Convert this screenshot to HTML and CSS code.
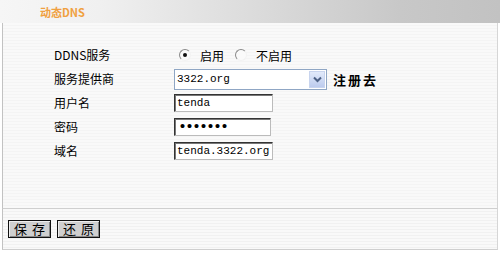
FILE: index.html
```html
<!DOCTYPE html>
<html>
<head>
<meta charset="utf-8">
<link rel="stylesheet" href="styles.css">
</head>
<body>
<div class="header"><span class="title">动态DNS</span></div>
<div class="panel">
  <div class="form">
    <div class="label">DDNS服务</div>
    <div class="ctrl">
      <span class="radio checked"></span><span class="rtext">启用</span>
      <span class="radio"></span><span class="rtext">不启用</span>
    </div>
    <div class="label">服务提供商</div>
    <div class="ctrl">
      <div class="select"><span class="seltext">3322.org</span><span class="arrow"><svg width="9" height="7" viewBox="0 0 9 7"><path d="M1 1.5 L4.5 5 L8 1.5" fill="none" stroke="#4d6185" stroke-width="2"/></svg></span></div>
      <span class="reg">注册去</span>
    </div>
    <div class="label">用户名</div>
    <div class="ctrl"><input class="field" type="text" value="tenda" readonly></div>
    <div class="label">密码</div>
    <div class="ctrl"><input class="field pw" type="password" value="1234567" readonly></div>
    <div class="label">域名</div>
    <div class="ctrl"><input class="field" type="text" value="tenda.3322.org" readonly></div>
  </div>
</div>
<div class="footer">
  <button class="btn">保存</button>
  <button class="btn">还原</button>
</div>
</body>
</html>
```
FILE: styles.css
```css
html, body {
  margin: 0;
  padding: 0;
  background: #fff;
  font-family: "Noto Sans CJK SC", "Liberation Sans", sans-serif;
  font-size: 12px;
  color: #000;
}
.header {
  height: 23px;
  background: linear-gradient(to right, #f6f6f6 0%, #f0f0f0 20%, #dcdcdc 50%, #c8c8c8 80%, #c2c2c2 100%);
  display: flex;
  align-items: center;
  padding-left: 40px;
}
.title {
  color: #f0a040;
  font-weight: bold;
  font-size: 11px;
  line-height: 12px;
  margin-top: 1px;
}
.panel {
  margin: 0 2px;
  height: 186px;
  box-sizing: border-box;
  border-left: 1px solid #c2c2c2;
  border-right: 1px solid #d6d6d6;
  border-bottom: 1px solid #cfcfcf;
  background: repeating-linear-gradient(to bottom, #f9f9f9 0 2px, #f4f4f4 2px 3px);
}
.form {
  display: grid;
  grid-template-columns: 120px auto;
  grid-auto-rows: 24px;
  align-items: center;
  padding: 20px 0 0 51px;
}
.label {
  font-size: 12px;
  line-height: 14px;
}
.ctrl {
  display: flex;
  align-items: center;
}
.radio {
  width: 10px;
  height: 10px;
  border-radius: 50%;
  border: 1px solid;
  border-color: #8a8a8a #f2f2f2 #f2f2f2 #8a8a8a;
  background: #fafafa;
  position: relative;
  margin-left: 5px;
  margin-right: 9px;
}
.radio.checked::after {
  content: "";
  position: absolute;
  left: 3px;
  top: 3px;
  width: 4px;
  height: 4px;
  border-radius: 50%;
  background: #111;
}
.rtext {
  margin-right: 6px;
}
.rtext + .radio {
  margin-left: 5px;
}
.select {
  width: 153px;
  height: 21px;
  box-sizing: border-box;
  border: 1px solid #8fa6c4;
  background: #fff;
  display: flex;
  align-items: center;
  justify-content: space-between;
  padding: 1px 1px 1px 2px;
}
.seltext {
  font-family: "Liberation Mono", monospace;
  font-size: 11px;
}
.arrow {
  width: 16px;
  height: 17px;
  background: linear-gradient(to bottom, #e2eafa, #bccbee);
  border: 1px solid #c8d4ee;
  box-sizing: border-box;
  display: flex;
  align-items: center;
  justify-content: center;
}
.reg {
  margin-left: 6px;
  font-weight: bold;
  font-size: 13px;
  letter-spacing: 2px;
}
.field {
  width: 99px;
  height: 18px;
  box-sizing: border-box;
  margin: 0;
  padding: 0 2px;
  border: 1px solid;
  border-color: #333 #bbb #bbb #333;
  box-shadow: inset 1px 1px 0 #777;
  background: #fff;
  font-family: "Liberation Mono", monospace;
  font-size: 11px;
  color: #000;
  outline: none;
}
.field.pw {
  width: 97px;
  font-size: 15px;
  letter-spacing: -2px;
  padding-left: 3px;
}
.footer {
  margin: 0 2px;
  height: 41px;
  box-sizing: border-box;
  border-left: 1px solid #c2c2c2;
  border-bottom: 1px solid #cfcfcf;
  border-right: 1px solid #d6d6d6;
  background: repeating-linear-gradient(to bottom, #f9f9f9 0 2px, #f1f1f1 2px 3px);
  display: flex;
  align-items: flex-start;
  gap: 6px;
  padding: 11px 0 0 5px;
}
.btn {
  width: 43px;
  height: 18px;
  margin: 0;
  padding: 0 0 0 5px;
  border: 1px solid #111;
  box-shadow: inset 1px 1px 0 #eee, inset -1px -1px 0 #888;
  background: #cfcfcf;
  font-family: "Noto Sans CJK SC", sans-serif;
  font-size: 13px;
  line-height: 16px;
  letter-spacing: 5px;
  color: #000;
  text-align: left;
}
```
